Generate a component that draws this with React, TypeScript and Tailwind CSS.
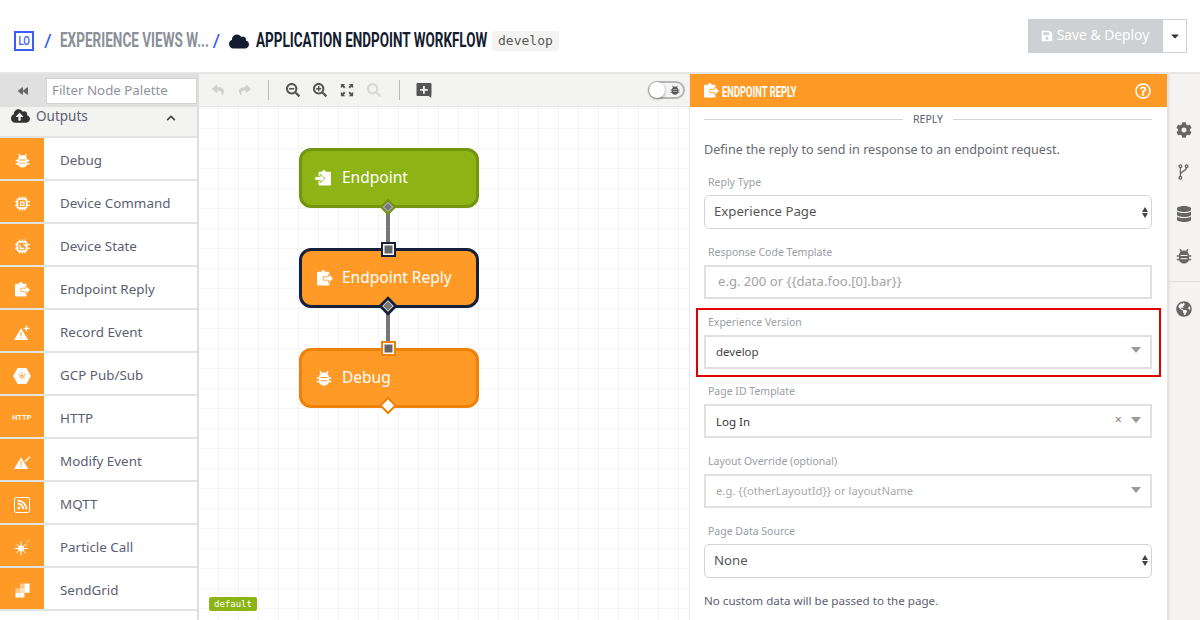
import { ReactNode } from 'react';
import { FaCloud, FaCloudUploadAlt, FaCog, FaDatabase, FaGlobeAmericas, FaReply, FaShare, FaSave, FaSearch, FaSearchMinus, FaSearchPlus, FaChevronUp, FaCaretDown, FaBackward, FaRegQuestionCircle, FaRss } from 'react-icons/fa';

const body = "font-['Noto_Sans','Open_Sans',sans-serif]";

const BugIcon = ({ className }: { className?: string }) => (
  <svg viewBox="0 0 16 16" className={className} fill="currentColor" stroke="none">
    <path fillRule="evenodd" d="M8 2.500c2.800 0 5 2.200 5 5v3.500c0 2.800-2.200 4.500-5 4.500s-5-1.700-5-4.500V7.500c0-2.800 2.200-5 5-5zM4.500 7v.9h7V7zm0 3.300v.9h7v-.9z" />
    <path d="M5.500 3.500L4 1.200M10.500 3.500L12 1.200M3.500 8H.8M3.500 11.500H.8M12.500 8h2.700M12.500 11.500h2.700" stroke="currentColor" strokeWidth="1.500" fill="none" />
  </svg>
);

const ReplyIcon = ({ className }: { className?: string }) => (
  <svg viewBox="0 0 20 18" className={className} fill="currentColor">
    <path d="M1 3.500C1 2.700 1.700 2 2.500 2H6c0-1.200.8-2 2-2s2 .8 2 2h3.500c.8 0 1.500.7 1.500 1.500V16c0 .8-.7 1.500-1.500 1.500h-11C1.700 17.500 1 16.800 1 16z" />
    <path d="M8 7.500h6V4.500l5.500 5L14 14.500v-3H8z" stroke="#ff9a26" strokeWidth="0.900" />
  </svg>
);

const EndpointIcon = ({ className }: { className?: string }) => (
  <svg viewBox="0 0 20 18" className={className} fill="currentColor">
    <path d="M5 3.500C5 2.700 5.700 2 6.500 2H9c0-1.200.8-2 2-2s2 .8 2 2h4.500c.8 0 1.500.7 1.500 1.500V16c0 .8-.7 1.500-1.500 1.500h-11C5.700 17.500 5 16.800 5 16z" />
    <path d="M.8 7.500h6V4.500l5.500 5-5.500 5v-3h-6z" stroke="#8db314" strokeWidth="0.900" />
  </svg>
);

const ChipIcon = ({ inner }: { inner: 'square' | 'check' }) => (
  <svg viewBox="0 0 16 16" className="w-[15px] h-[15px]" fill="none" stroke="currentColor">
    <rect x="2.500" y="3" width="10" height="10" rx="2.500" strokeWidth="2" />
    <path d="M5 .5v3M8 .5v3M11 .5v3M5 12.500v3M8 12.500v3M11 12.500v3M0 6h2M0 10h2M14 10h2M14 6h2" strokeWidth="1.300" />
    {inner === 'square' ? <rect x="6" y="6.500" width="3.500" height="3.500" strokeWidth="1.300" /> : <path d="M5.500 6v4.200h4.500M9 5.500l2.500 2" strokeWidth="1.500" />}
  </svg>
);

const EventIcon = ({ extra }: { extra: 'plus' | 'slash' }) => (
  <svg viewBox="0 0 18 16" className="w-[17px] h-[16px]" fill="currentColor">
    <path fillRule="evenodd" d="M7.500 3L15 15.500H0zM7 7v4.500h1V7zm0 5.500v1.200h1v-1.200z" />
    {extra === 'plus' ? <path d="M12.500 0h1.300v2.500h2.700v1.300h-2.700v2.500h-1.300V3.800H10V2.500h2.500z" /> : <path d="M11 7l5.500-5 .8.8-5.300 5.500z" />}
  </svg>
);

const HexIcon = () => (
  <svg viewBox="0 0 20 18" className="w-[18px] h-[16px]">
    <path d="M5 0h10l5 9-5 9H5L0 9z" fill="currentColor" />
    <path d="M10 5v8M6.500 7l7 4M13.500 7l-7 4" stroke="#ff9a26" strokeWidth="1.300" strokeDasharray="1.500 1" />
  </svg>
);

const ParticleIcon = () => (
  <svg viewBox="0 0 16 16" className="w-[16px] h-[16px]" fill="currentColor">
    <circle cx="7" cy="8.500" r="3" />
    <path d="M7 1.500v14M.500 8.500h13M2.500 4l9 9M11.500 4l-9 9" stroke="currentColor" strokeWidth="1" />
    <path d="M13 2.500c.3-1 1-1.500 2-1.500M13 5l-1.500 1" stroke="currentColor" strokeWidth="0.900" fill="none" />
  </svg>
);

const GridIcon = () => (
  <svg viewBox="0 0 16 16" className="w-[15px] h-[15px]" fill="currentColor">
    <rect x="10" y="0.500" width="5.500" height="5.500" />
    <rect x="5" y="0.500" width="5" height="5" opacity="0.45" />
    <rect x="5" y="5.500" width="5" height="5" opacity="0.7" />
    <rect x="10" y="5.500" width="5.500" height="5" />
    <rect x="0.500" y="5.500" width="4.500" height="5" opacity="0.45" />
    <rect x="0.500" y="10.500" width="4.500" height="5" />
    <rect x="5" y="10.500" width="5" height="5" />
  </svg>
);

const BranchIcon = ({ className }: { className?: string }) => (
  <svg viewBox="0 0 12 18" className={className} fill="none" stroke="currentColor" strokeWidth="1.400">
    <circle cx="2.500" cy="2.500" r="1.500" />
    <circle cx="9.500" cy="2.500" r="1.500" />
    <circle cx="2.500" cy="15.500" r="1.500" />
    <path d="M2.500 4v10M9.500 4c0 4-7 4-7 8" />
  </svg>
);

const FitIcon = ({ className }: { className?: string }) => (
  <svg viewBox="0 0 16 16" className={className} fill="currentColor">
    <path d="M1 1h5L4.300 2.700 6.300 4.700 4.700 6.300 2.700 4.300 1 6zM15 1v5l-1.700-1.700-2 2-1.600-1.600 2-2L10 1zM1 15v-5l1.700 1.700 2-2 1.600 1.600-2 2L6 15zM15 15h-5l1.700-1.700-2-2 1.600-1.600 2 2L15 10z" />
  </svg>
);

const palette: { label: string; icon: ReactNode }[] = [
  { label: 'Debug', icon: <BugIcon className="w-[15px] h-[15px]" /> },
  { label: 'Device Command', icon: <ChipIcon inner="square" /> },
  { label: 'Device State', icon: <ChipIcon inner="check" /> },
  { label: 'Endpoint Reply', icon: <ReplyIcon className="w-[17px] h-[15px]" /> },
  { label: 'Record Event', icon: <EventIcon extra="plus" /> },
  { label: 'GCP Pub/Sub', icon: <HexIcon /> },
  { label: 'HTTP', icon: <span className="text-[7px] font-bold font-['Liberation_Sans',sans-serif] tracking-[0.3px]">HTTP</span> },
  { label: 'Modify Event', icon: <EventIcon extra="slash" /> },
  { label: 'MQTT', icon: <span className="w-[16px] h-[16px] rounded-[2px] border border-white flex items-center justify-center"><FaRss className="w-[11px] h-[11px]" /></span> },
  { label: 'Particle Call', icon: <ParticleIcon /> },
  { label: 'SendGrid', icon: <GridIcon /> },
];

const PaletteRow = ({ label, icon }: { label: string; icon: ReactNode }) => (
  <div className="h-[43px] shrink-0 flex bg-white border-b-2 border-[#e3e3e3]">
    <div className="w-[44px] pt-[4px] bg-[#ff9a26] text-white flex items-center justify-center">{icon}</div>
    <div className="pl-[16px] pt-[4px] flex items-center text-[13.400px] text-[#5b6070]">{label}</div>
  </div>
);

const Sidebar = () => (
  <div className="w-[199px] shrink-0 flex flex-col border-r-2 border-[#dedede] overflow-hidden">
    <div className="h-[33px] shrink-0 bg-[#e0e0e0] flex items-center">
      <div className="w-[46px] flex justify-center text-[#666]"><FaBackward className="w-[12px] h-[10px]" /></div>
      <div className="w-[151px] h-[26px] mt-[1px] bg-white border border-[#d3d3d3] flex items-center pl-[5px] text-[13.300px] text-[#8f939b]">Filter Node Palette</div>
    </div>
    <div className="h-[29px] shrink-0 bg-[#f3f3f2] flex items-start pl-[11px] pr-[21px] text-[#5b6070] text-[13.500px]">
      <FaCloudUploadAlt className="w-[19px] h-[16px] text-[#333] mt-[1px]" />
      <span className="ml-[6px] leading-[18px]">Outputs</span>
      <FaChevronUp className="ml-auto w-[10px] h-[10px] mt-[6px] text-[#444]" />
    </div>
    <div className="flex flex-col border-t-2 border-[#e3e3e3]">
      {palette.map((p) => <PaletteRow key={p.label} {...p} />)}
    </div>
  </div>
);

const Toolbar = () => (
  <div className="h-[33px] shrink-0 bg-[#f3f3f2] border-b border-[#e6e6e6] flex items-center pl-[11px] pr-[4px] text-[#555]">
    <FaReply className="w-[16px] h-[12px] text-[#d0d0d0]" />
    <FaShare className="w-[16px] h-[12px] text-[#d0d0d0] ml-[11px]" />
    <div className="w-px h-[20px] bg-[#bbb] ml-[15px]" />
    <FaSearchMinus className="w-[14px] h-[14px] ml-[17px]" />
    <FaSearchPlus className="w-[14px] h-[14px] ml-[13px]" />
    <FitIcon className="w-[14px] h-[14px] ml-[13px]" />
    <FaSearch className="w-[14px] h-[14px] ml-[13px] text-[#d8d8d8]" />
    <div className="w-px h-[20px] bg-[#bbb] ml-[18px]" />
    <svg viewBox="0 0 16 16" className="w-[16px] h-[16px] ml-[16px]" fill="currentColor">
      <path fillRule="evenodd" d="M1.500 1h13c.6 0 1 .4 1 1v11c0 .600-.4 1-1 1H15l.5 2-3-2H1.500c-.6 0-1-.4-1-1V2c0-.6.4-1 1-1zM7 4v3H4v1.800h3v3h1.800v-3h3V7h-3V4z" />
    </svg>
    <div className="ml-auto w-[37px] h-[18px] rounded-full bg-[#f5f5f5] border-2 border-[#b5b5b5] flex items-center justify-end pr-[3px] relative">
      <BugIcon className="w-[10px] h-[10px] text-[#555]" />
      <div className="absolute left-[-1px] top-[-1px] w-[16px] h-[16px] rounded-full bg-white shadow-[0_1px_3px_rgba(0,0,0,0.4)]" />
    </div>
  </div>
);

const Node = ({ x, y, label, icon, tone }: { x: number; y: number; label: string; icon: ReactNode; tone: string }) => (
  <div style={{ left: x, top: y }} className={`absolute w-[180px] h-[60px] rounded-[12px] border-[3px] flex items-center text-white text-[15.500px] ${tone}`}>
    <div className="w-[40px] pl-[12px] shrink-0">{icon}</div>
    <span>{label}</span>
  </div>
);

const Canvas = () => (
  <div className="relative flex-1 overflow-hidden bg-white bg-[linear-gradient(#f4f4f4_1px,transparent_1px),linear-gradient(90deg,#f4f4f4_1px,transparent_1px)] bg-[size:20px_20px] bg-[position:19px_1px]">
    <Node x={100} y={41} label="Endpoint" tone="bg-[#8db314] border-[#72960f]" icon={<EndpointIcon className="w-[18px] h-[16px] text-white" />} />
    <Node x={100} y={141} label="Endpoint Reply" tone="bg-[#ff9a26] border-[#15213a]" icon={<ReplyIcon className="w-[18px] h-[16px] ml-[2px] text-white" />} />
    <Node x={100} y={241} label="Debug" tone="bg-[#ff9a26] border-[#ee8107]" icon={<BugIcon className="w-[16px] h-[16px] ml-[2px] text-white" />} />
    <svg className="absolute left-[169px] top-[90px]" width="40" height="220" viewBox="0 0 40 220">
      <path d="M20 10V52M20 109V151" stroke="#777" strokeWidth="4" />
      <path d="M20 3l7 7-7 7-7-7z" fill="#777" stroke="#72960f" strokeWidth="2" />
      <path d="M20 5.500l4.500 4.500-4.500 4.500-4.500-4.500z" fill="#777" stroke="#ddd" strokeWidth="0.800" />
      <rect x="14" y="46" width="13" height="13" fill="#fff" stroke="#15213a" strokeWidth="2" />
      <rect x="16.500" y="48.500" width="8" height="8" fill="#666" />
      <path d="M20 101l8 8-8 8-8-8z" fill="#777" stroke="#15213a" strokeWidth="2.500" />
      <path d="M20 104l5 5-5 5-5-5z" fill="#777" stroke="#ddd" strokeWidth="0.800" />
      <rect x="14" y="145" width="13" height="13" fill="#fff" stroke="#ee8107" strokeWidth="2" />
      <rect x="16.500" y="147.500" width="8" height="8" fill="#666" />
      <path d="M20 201l7.500 7.500-7.500 7.500-7.500-7.500z" fill="#fff" stroke="#ee8107" strokeWidth="2" />
    </svg>
    <div className="absolute left-[10px] bottom-[9px] h-[14px] w-[48px] text-center rounded-[2px] bg-[#8db314] text-white text-[9px] leading-[14px] font-['DejaVu_Sans_Mono',monospace]">default</div>
  </div>
);

const Caret = () => <span className="w-0 h-0 border-x-[5px] border-x-transparent border-t-[6px] border-t-[#999]" />;

const Field = ({ label, children }: { label: string; children: ReactNode }) => (
  <div className="h-[69.750px]">
    <div className="h-[16px] pl-[4px] text-[10.500px] leading-[16px] text-[#9a9ea6]">{label}</div>
    <div className="mt-[5px]">{children}</div>
  </div>
);

const NativeSelect = ({ value }: { value: string }) => (
  <div className="h-[34px] border border-[#d4d4d4] rounded-[5px] flex items-center pl-[9px] pr-[3px] text-[13.200px] text-[#555]">
    {value}
    <span className="ml-auto flex flex-col gap-[1px]">
      <span className="w-0 h-0 border-x-[3.500px] border-x-transparent border-b-[5px] border-b-[#444]" />
      <span className="w-0 h-0 border-x-[3.500px] border-x-transparent border-t-[5px] border-t-[#444]" />
    </span>
  </div>
);

const Combo = ({ children, clear }: { children: ReactNode; clear?: boolean }) => (
  <div className="h-[34px] border-2 border-[#e0e0e0] flex items-center pl-[10px] pr-[9px] text-[11.500px]">
    {children}
    <span className="ml-auto flex items-center gap-[9px] -mt-[3px]">
      {clear && <span className="text-[#888] text-[13px] leading-none">×</span>}
      <Caret />
    </span>
  </div>
);

const Inspector = () => (
  <div className="relative w-[478px] shrink-0 bg-white border-l border-[#e6e6e6] overflow-hidden flex flex-col">
    <div className="h-[33px] shrink-0 bg-[#ff9a26] text-white flex items-center pl-[13px] pr-[16px]">
      <ReplyIcon className="w-[17px] h-[15px]" />
      <span className="ml-[2px] w-[76px] h-[18px] leading-[18px] whitespace-nowrap">
        <span className="inline-block origin-left text-[14px] font-['Roboto',sans-serif] font-bold [transform:scaleX(0.67)]">ENDPOINT REPLY</span>
      </span>
      <FaRegQuestionCircle className="ml-auto w-[16px] h-[16px]" />
    </div>
    <div className="pl-[14px] pr-[15px] flex-1">
      <div className="h-[25px] flex items-center text-[10.500px] text-[#5b6070]">
        <div className="flex-1 h-px bg-[#d5d5d5]" />
        <span className="px-[10px]">REPLY</span>
        <div className="flex-1 h-px bg-[#d5d5d5]" />
      </div>
      <div className="mt-[8px] h-[20px] leading-[20px] text-[12.600px] text-[#666a72]">Define the reply to send in response to an endpoint request.</div>
      <div className="mt-[14px]">
        <Field label="Reply Type"><NativeSelect value="Experience Page" /></Field>
        <Field label="Response Code Template">
          <div className="h-[34px] border-2 border-[#e0e0e0] flex items-center pl-[12px] text-[13.100px] text-[#a3a3a3]">{'e.g. 200 or {{data.foo.[0].bar}}'}</div>
        </Field>
        <Field label="Experience Version"><Combo><span className="text-[#444]">develop</span></Combo></Field>
        <Field label="Page ID Template"><Combo clear><span className="text-[#333]">Log In</span></Combo></Field>
        <Field label="Layout Override (optional)"><Combo><span className="text-[#aaa] text-[11.300px]">{'e.g. {{otherLayoutId}} or layoutName'}</span></Combo></Field>
        <Field label="Page Data Source"><NativeSelect value="None" /></Field>
      </div>
      <div className="-mt-[2px] h-[20px] leading-[20px] text-[11.600px] text-[#5b6070]">No custom data will be passed to the page.</div>
    </div>
    <div className="absolute left-[6px] top-[234px] w-[465px] h-[69px] border-2 border-[#e00000]" />
  </div>
);

const Rail = () => (
  <div className="flex-1 bg-[#f5f4f3] border-l-2 border-[#e2e2e2] shadow-[inset_3px_0_3px_-2px_rgba(0,0,0,0.06)] flex flex-col items-center text-[#666] pt-[48px]">
    <FaCog className="w-[16px] h-[16px] mr-[2px]" />
    <BranchIcon className="w-[11px] h-[16px] mt-[26px] mr-[2px]" />
    <FaDatabase className="w-[14px] h-[16px] mt-[26px] mr-[2px]" />
    <BugIcon className="w-[16px] h-[16px] mt-[26px] mr-[2px]" />
    <div className="w-full h-px bg-[#e0e0e0] mt-[17px]" />
    <FaGlobeAmericas className="w-[16px] h-[16px] mt-[19px] mr-[2px]" />
  </div>
);

export default function App() {
  return (
    <div className={`w-[1200px] h-[620px] overflow-hidden flex flex-col bg-white ${body}`}>
      <div className="h-[74px] shrink-0 border-b-2 border-[#e6e6e6] flex items-start pl-[14px] pr-[13px]">
        <div className="mt-[31px] flex items-center h-[20px]">
          <div className="w-[20px] h-[20px] border-2 border-[#3a5cf5] flex items-center justify-center text-[#3a5cf5]">
            <span className="inline-block text-[12px] font-['Roboto',sans-serif] font-medium [transform:scaleX(0.8)]">LO</span>
          </div>
          <span className="ml-[10px] text-[20px] text-[#3a5cf5]">/</span>
          <span className="ml-[9px] w-[149px] whitespace-nowrap">
            <span className="inline-block origin-left text-[21px] text-[#8b8f98] font-['Roboto',sans-serif] font-bold [transform:scaleX(0.645)]">EXPERIENCE VIEWS W...</span>
          </span>
          <span className="ml-[3px] text-[20px] text-[#3a5cf5]">/</span>
          <FaCloud className="ml-[9px] w-[20px] h-[17px] text-[#131c30]" />
          <span className="ml-[7px] w-[231px] whitespace-nowrap">
            <span className="inline-block origin-left text-[21px] text-[#131c30] font-['Roboto',sans-serif] font-bold [transform:scaleX(0.642)]">APPLICATION ENDPOINT WORKFLOW</span>
          </span>
          <span className="ml-[5px] h-[20px] w-[67px] text-center rounded-[3px] bg-[#f3f3f2] text-[#5a5a5a] text-[13px] leading-[20px] font-['DejaVu_Sans_Mono',monospace]">develop</span>
        </div>
        <div className="ml-auto mt-[19px] flex h-[34px]">
          <div className="w-[134px] pb-[1px] bg-[#ced0d3] text-white text-[13.800px] flex items-center justify-center gap-[4px]"><FaSave className="w-[12px] h-[12px]" />Save &amp; Deploy</div>
          <div className="w-[25px] bg-white border border-[#ced0d3] flex items-center justify-center text-[#333]"><FaCaretDown className="w-[12px] h-[12px]" /></div>
        </div>
      </div>
      <div className="flex-1 flex min-h-0">
        <Sidebar />
        <div className="w-[490px] shrink-0 flex flex-col">
          <Toolbar />
          <Canvas />
        </div>
        <Inspector />
        <Rail />
      </div>
    </div>
  );
}
